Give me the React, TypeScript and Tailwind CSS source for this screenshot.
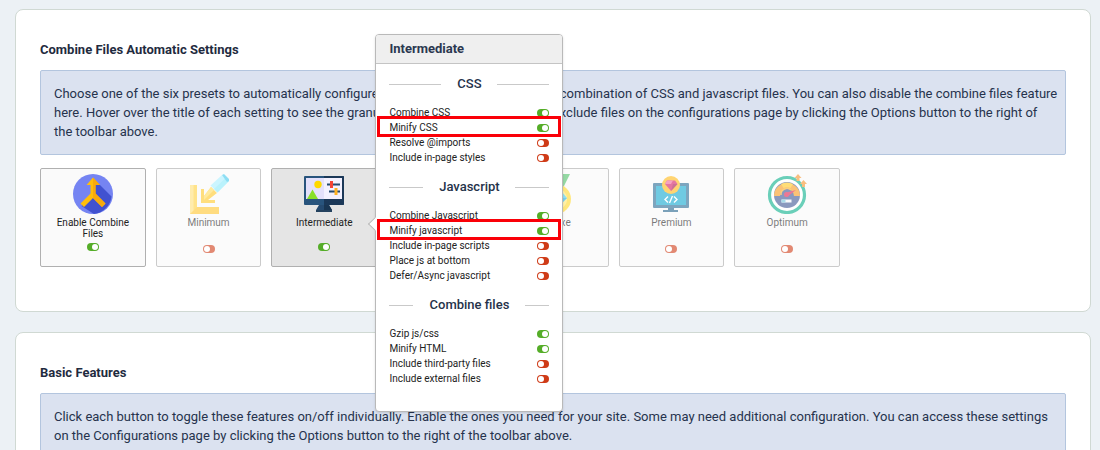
import type { ReactNode } from "react";
import clsx from "clsx";

function Toggle({ on }: { on: boolean }) {
  return (
    <svg
      role="img"
      aria-label={on ? "On" : "Off"}
      viewBox="0 0 12 8"
      className={clsx("h-2 w-3 shrink-0", on ? "text-[#55ad28]" : "text-[#cf3b17]")}
    >
      <rect width="12" height="8" rx="4" fill="currentColor" />
      <circle cx={on ? 8 : 4} cy="4" r="3" fill="#fff" />
    </svg>
  );
}

function CombineIcon() {
  return (
    <svg viewBox="0 0 40 40" className="size-10">
      <circle cx="20" cy="20" r="20" fill="#7584f2" />
      <path d="M20 4 L38.500 22.500 A20 20 0 0 1 21 40 L8.500 32 L18 24 Z" fill="#4152d0" />
      <path d="M20 3.500 L27 11 H22.500 V19.500 L32.500 29.500 L29 33 L20 24 L11 33 L7.500 29.500 L17.500 19.500 V11 H13.500 Z" fill="#ffbe0a" />
      <path d="M20 3.500 L27 11 H22.500 V19.500 L32.500 29.500 L29 33 L20 24 Z" fill="#f8aa0c" />
    </svg>
  );
}

function MinimumIcon() {
  return (
    <svg viewBox="0 0 40 40" className="size-10">
      <path d="M1 11 H8 V33 H30 V40 H1 Z" fill="#ffd23e" />
      <path d="M1 11 H4.500 V36.500 H30 V40 H1 Z" fill="#ffe078" />
      <path d="M1 40 L8 33 H30 V40 Z" fill="#ffc62c" />
      <path d="M12 15 H15 V22 L22 13 L28 19 L19 26 H26 V29 H12 Z" fill="#ffc928" />
      <path d="M15 26 V22 L22 13 L25 16 Z" fill="#ffdd5e" />
      <path d="M21.500 11.500 L33 1 L40 7 L28.500 18.500 Z" fill="#aaf0ff" />
      <path d="M25 15 L36.500 4 L40 7 L28.500 18.500 Z" fill="#8deafb" />
      <path d="M33 1 L35 0 L40 5 L40 7 L38 8 Z" fill="#42c9ee" />
    </svg>
  );
}

function IntermediateIcon() {
  return (
    <svg viewBox="0 0 40 40" className="size-10">
      <path d="M15 31 H25 L28 36 V38 H12 V36 Z" fill="#254a70" />
      <path d="M20 31 H25 L28 36 V38 H20 Z" fill="#193653" />
      <path d="M12 36 H28 V38 H12 Z" fill="#24425f" />
      <rect y="2" width="40" height="29" rx="1" fill="#28547d" />
      <path d="M20 2 H39 Q40 2 40 3 V30 Q40 31 39 31 H20 Z" fill="#1b3858" />
      <rect x="2" y="4" width="36" height="21" fill="#e3e0fb" />
      <rect x="20" y="4" width="18" height="21" fill="#f3f1ff" />
      <circle cx="14" cy="10.500" r="3.700" fill="#ffd900" />
      <path d="M3 25 L8.500 15.500 L14 25 Z" fill="#88df28" />
      <path d="M23 10.500 H36 M25 17.500 H36" stroke="#254b70" strokeWidth="1.800" />
      <path d="M27.500 7 V14" stroke="#f44336" strokeWidth="3" />
      <path d="M32 14 V21" stroke="#ffb323" strokeWidth="3" />
    </svg>
  );
}

function AverageIcon() {
  return (
    <svg viewBox="0 0 40 40" className="size-10">
      <rect x="4" y="22" width="8" height="14" fill="#ffc62c" />
      <rect x="16" y="14" width="8" height="22" fill="#63c8dc" />
      <rect x="28" y="6" width="8" height="30" fill="#5ac08e" />
    </svg>
  );
}

function DeluxeIcon() {
  return (
    <svg viewBox="0 0 40 40" className="size-10">
      <path d="M6 0 H16 L24 12 L16 16 Z" fill="#4cbf86" />
      <path d="M34 0 H24 L16 12 L26 16 Z" fill="#50c068" />
      <circle cx="20" cy="25" r="15" fill="#ffd829" />
      <circle cx="20" cy="25" r="11" fill="#ffe873" />
      <path d="M14 18 H26 L31 24 L20 35 L9 24 Z" fill="#46cdea" />
      <path d="M9 24 H31 L20 35 Z" fill="#26afe0" />
    </svg>
  );
}

function PremiumIcon() {
  return (
    <svg viewBox="0 0 40 40" className="size-10">
      <path d="M17 32 H23 V36 H27 V38 H12 V36 H17 Z" fill="#24638c" />
      <rect x="2" y="9" width="36" height="25" rx="1" fill="#286b94" />
      <rect x="5" y="12" width="30" height="19" fill="#10a8d0" />
      <path d="M17 22.500 L14 25.500 L17 28.500 M23 22.500 L26 25.500 L23 28.500 M21.500 22 L18.500 29" fill="none" stroke="#fff" strokeWidth="1.400" />
      <circle cx="20" cy="11" r="9" fill="#ffb915" />
      <path d="M16 6.500 H24 L26.500 10 L20 17 L14 10 Z" fill="#d51c63" />
      <path d="M16 6.500 H22 L20 10 H14 Z" fill="#f06598" />
      <path d="M20 17 L22 10 H26.500 Z" fill="#aa164f" />
    </svg>
  );
}

function OptimumIcon() {
  return (
    <svg viewBox="0 0 40 40" className="size-10">
      <circle cx="20" cy="21" r="17.500" fill="#fff" stroke="#08b08b" strokeWidth="3.200" />
      <circle cx="20" cy="21" r="13" fill="#3e5794" />
      <path d="M7 22 A13 13 0 0 1 33 22 H27 A7 7 0 0 0 13 22 Z" fill="#f99b1c" />
      <path d="M14 10 A13 13 0 0 1 26 10 L23.500 14 Q20 12.500 16.500 14 Z" fill="#ffc91f" />
      <path d="M14 21 A6 6 0 0 1 24 16" fill="none" stroke="#f8b22c" strokeWidth="1.500" />
      <path d="M18 19 L29 16 L20 23 Z" fill="#e02050" />
      <circle cx="19.500" cy="20.500" r="2.500" fill="#e02050" />
      <rect x="14.500" y="25.500" width="10" height="3" fill="#f6f7fb" />
      <rect x="14.500" y="25.500" width="4" height="3" fill="#73c6dd" />
      <path d="M31 0 L34.500 4 H32.500 V7 H29.500 V4 H27.500 Z M36.500 6 L40 10 H38 V13 H35 V10 H33 Z" fill="#f5942c" />
    </svg>
  );
}

type Preset = { name: string; icon: ReactNode; on: boolean; state: "main" | "selected" | "idle" };

const presets: Preset[] = [
  { name: "Enable Combine Files", icon: <CombineIcon />, on: true, state: "main" },
  { name: "Minimum", icon: <MinimumIcon />, on: false, state: "idle" },
  { name: "Intermediate", icon: <IntermediateIcon />, on: true, state: "selected" },
  { name: "Average", icon: <AverageIcon />, on: false, state: "idle" },
  { name: "Deluxe", icon: <DeluxeIcon />, on: false, state: "idle" },
  { name: "Premium", icon: <PremiumIcon />, on: false, state: "idle" },
  { name: "Optimum", icon: <OptimumIcon />, on: false, state: "idle" },
];

type Row = { label: string; on: boolean; marked?: boolean };

const groups: { title: string; lineWidth: string; rows: Row[] }[] = [
  {
    title: "CSS",
    lineWidth: "w-[52px]",
    rows: [
      { label: "Combine CSS", on: true },
      { label: "Minify CSS", on: true, marked: true },
      { label: "Resolve @imports", on: false },
      { label: "Include in-page styles", on: false },
    ],
  },
  {
    title: "Javascript",
    lineWidth: "w-[34px]",
    rows: [
      { label: "Combine Javascript", on: true },
      { label: "Minify javascript", on: true, marked: true },
      { label: "Include in-page scripts", on: false },
      { label: "Place js at bottom", on: false },
      { label: "Defer/Async javascript", on: false },
    ],
  },
  {
    title: "Combine files",
    lineWidth: "w-6",
    rows: [
      { label: "Gzip js/css", on: true },
      { label: "Minify HTML", on: true },
      { label: "Include third-party files", on: false },
      { label: "Include external files", on: false },
    ],
  },
];

function PresetDetails() {
  return (
    <div
      role="tooltip"
      className="absolute -top-[134px] left-[104px] z-10 w-[188px] rounded-[4px] border border-[#b9b9b9] bg-white shadow-sm"
    >
      <span className="absolute top-[184px] -left-[6px] size-[10px] rotate-45 border-b border-l border-[#b9b9b9] bg-white" />
      <h3 className="rounded-t-[3px] border-b border-[#c4c4c4] bg-[#efefef] px-[13px] py-1 text-[13px] leading-5 font-bold text-[#2b3850]">
        Intermediate
      </h3>
      <div className="flex flex-col gap-3 px-[13px] pt-[10px] pb-[25px]">
        {groups.map((group) => (
          <section key={group.title} className="flex flex-col gap-[11px]">
            <h4 className="flex items-center justify-between text-[13px] leading-5 font-medium text-[#25324a]">
              <span className={clsx("h-px bg-[#c9c9c9]", group.lineWidth)} />
              {group.title}
              <span className={clsx("h-px bg-[#c9c9c9]", group.lineWidth)} />
            </h4>
            <ul>
              {group.rows.map((row) => (
                <li
                  key={row.label}
                  className="relative flex items-center justify-between text-[10px] leading-[15px] text-[#222]"
                >
                  {row.label}
                  <Toggle on={row.on} />
                  {row.marked && (
                    <span className="absolute -inset-x-3 -top-1 -bottom-[2px] z-10 border-3 border-[#fa0008]" />
                  )}
                </li>
              ))}
            </ul>
          </section>
        ))}
      </div>
    </div>
  );
}

function PresetCard({ preset }: { preset: Preset }) {
  return (
    <div className="relative">
      <button
        type="button"
        className={clsx(
          "flex h-[99px] w-full flex-col items-center rounded-[2px] border px-3 pt-[5px] text-[10px] leading-[11px] text-[#222]",
          preset.state === "main" && "border-[#b0b0b0] bg-[#fafafa]",
          preset.state === "selected" && "border-[#b0b0b0] bg-[#e5e5e5]",
          preset.state === "idle" && "border-[#aaa] bg-[#fafafa] opacity-60",
        )}
      >
        {preset.icon}
        <span className="mt-[3px] h-[22px]">{preset.name}</span>
        <span className={preset.state === "idle" ? "mt-[6px]" : "mt-1"}>
          <Toggle on={preset.on} />
        </span>
      </button>
      {preset.state === "selected" && <PresetDetails />}
    </div>
  );
}

function Panel({ title, note, children }: { title: string; note: ReactNode; children?: ReactNode }) {
  return (
    <section className="rounded-lg border border-[#d0d9d3] bg-white px-6 pt-[30px] pb-11">
      <h2 className="text-[13px] leading-5 font-bold text-[#1f2b40]">{title}</h2>
      <p className="mt-[10px] rounded-[2px] border border-[#b3c5de] bg-[#dbe2f0] py-[13px] pl-[13px] text-[13px] leading-[19px] text-[#26334d]">
        {note}
      </p>
      {children}
    </section>
  );
}

export default function App() {
  return (
    <main className="flex h-screen flex-col gap-5 overflow-hidden bg-[#ecf1f5] pt-[9px] pr-[9px] pl-[15px] font-['Roboto',sans-serif] *:shrink-0">
      <Panel
        title="Combine Files Automatic Settings"
        note={
          <>
            Choose one of the six presets to automatically configure the recommended settings for combination of CSS
            and javascript files. You can also disable the combine files feature here. Hover over the title of each
            setting to see the granular details. You can choose to exclude files on the configurations page by
            clicking the Options button to the right of the&nbsp;toolbar above.
          </>
        }
      >
        <div className="mt-[13px] grid max-w-[800px] grid-cols-7 gap-[10px]">
          {presets.map((preset) => (
            <PresetCard key={preset.name} preset={preset} />
          ))}
        </div>
      </Panel>
      <Panel
        title="Basic Features"
        note="Click each button to toggle these features on/off individually. Enable the ones you need for your site. Some may need additional configuration. You can access these settings on the Configurations page by clicking the Options button to the right of the toolbar above."
      />
    </main>
  );
}
